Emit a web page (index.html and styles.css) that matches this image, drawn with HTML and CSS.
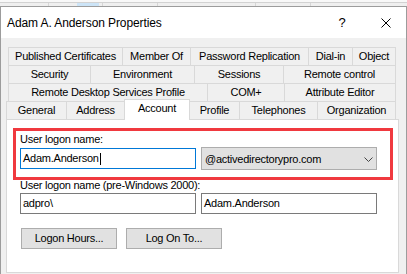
FILE: index.html
```html
<!DOCTYPE html>
<html lang="en">
<head>
    <meta charset="UTF-8">
    <title>Adam A. Anderson Properties</title>
    <link rel="stylesheet" href="styles.css">
</head>
<body>
    <!-- edge of the window behind -->
    <div class="strip"></div>
    <div class="strip-lower">
        <div class="cell c1"></div>
        <div class="cell c2"><div class="hilite"></div></div>
        <div class="cell c3"></div>
        <div class="cell c4"></div>
        <div class="cell c5"></div>
    </div>

    <div class="window">
        <div class="titlebar">
            <span class="title">Adam A. Anderson Properties</span>
            <span class="help">?</span>
            <svg class="close" width="10" height="10" viewBox="0 0 10 10">
                <path d="M0.5 0.5 L9.5 9.5 M9.5 0.5 L0.5 9.5" stroke="#000" stroke-width="1" fill="none"/>
            </svg>
        </div>

        <div class="tabbody">
            <!-- tab rows, back to front -->
            <div class="tabrow back r1">
                <div class="tab">Published Certificates</div>
                <div class="tab">Member Of</div>
                <div class="tab">Password Replication</div>
                <div class="tab">Dial-in</div>
                <div class="tab">Object</div>
            </div>
            <div class="tabrow back r2">
                <div class="tab">Security</div>
                <div class="tab">Environment</div>
                <div class="tab">Sessions</div>
                <div class="tab">Remote control</div>
            </div>
            <div class="tabrow back r3">
                <div class="tab">Remote Desktop Services Profile</div>
                <div class="tab">COM+</div>
                <div class="tab">Attribute Editor</div>
            </div>
            <div class="tabrow front r4">
                <div class="tab">General</div>
                <div class="tab">Address</div>
                <div class="tab active">Account</div>
                <div class="tab">Profile</div>
                <div class="tab">Telephones</div>
                <div class="tab">Organization</div>
            </div>

            <div class="panel">
                <div class="logon-box">
                    <div class="label">User logon name:</div>
                    <div class="field-row">
                        <div class="input focus">Adam.Anderson<span class="caret"></span></div>
                        <div class="combo">
                            @activedirectorypro.com
                            <svg class="chevron" width="9" height="5" viewBox="0 0 9 5">
                                <polyline points="0.5,0.5 4.5,4.5 8.5,0.5" stroke="#444" stroke-width="1" fill="none"/>
                            </svg>
                        </div>
                    </div>
                </div>

                <div class="section">
                    <div class="label">User logon name (pre-Windows 2000):</div>
                    <div class="field-row">
                        <div class="input">adpro\</div>
                        <div class="input">Adam.Anderson</div>
                    </div>
                    <div class="buttons">
                        <div class="btn">Logon Hours...</div>
                        <div class="btn">Log On To...</div>
                    </div>
                </div>
            </div>
        </div>
    </div>
</body>
</html>
```

FILE: styles.css
```css
* {
    box-sizing: border-box;
}
body {
    margin: 0;
    width: 407px;
    height: 274px;
    overflow: hidden;
    font-family: "Liberation Sans", Arial, sans-serif;
    font-size: 11px;
    letter-spacing: -0.25px;
    color: #000;
    background: #fff;
}

/* background window edge */
.strip {
    height: 3px;
    background: #f8f8f8;
    border-bottom: 1px solid #d2d2d2;
}
.strip-lower {
    display: flex;
    height: 3px;
    background: #efefef;
}
.cell {
    border-right: 1px solid #d6d6d6;
}
.c1 { width: 49px; }
.c2 { width: 54px; }
.c3 { width: 55px; }
.c4 { width: 98px; }
.c5 { width: 55px; }
.hilite {
    margin-left: 28px;
    width: 22px;
    height: 3px;
    background: #cce4f7;
}

.window {
    height: 268px;
    border: 1px solid #9c9c9c;
    border-bottom: none;
    background: #f0f0f0;
}
.titlebar {
    display: flex;
    align-items: center;
    height: 31px;
    padding-left: 6px;
    background: #fff;
}
.title {
    flex: 1;
    font-size: 12px;
    line-height: 14px;
    letter-spacing: -0.1px;
}
.help {
    width: 20px;
    margin-right: 29px;
    font-size: 13px;
    line-height: 14px;
    text-align: center;
}
.close {
    margin-right: 15px;
}

.tabbody {
    padding: 9px 0 0 5px;
}
.tabrow {
    display: grid;
    grid-template-rows: 18px;
}
.tabrow.back {
    width: 388px;
    margin-left: 2px;
}
.tabrow.front {
    width: 390px;
}
.r1 { grid-template-columns: 115px 68px 118px 44px 1fr; }
.r2 { grid-template-columns: 83px 104px 89px 1fr; }
.r3 { grid-template-columns: 200px 77px 1fr; }
.r4 { grid-template-columns: 61px 58px 65px 50px 78px 1fr; }

.tab {
    border-top: 1px solid #d9d9d9;
    border-right: 1px solid #d9d9d9;
    background: #f0f0f0;
    line-height: 17px;
    text-align: center;
    white-space: nowrap;
}
.tab:first-child {
    border-left: 1px solid #d9d9d9;
}
.tab.active {
    position: relative;
    z-index: 1;
    margin: -2px 0 -1px -1px;
    border-left: 1px solid #d9d9d9;
    background: #fff;
}

.panel {
    width: 393px;
    height: 154px;
    border: 1px solid #d9d9d9;
    background: #fff;
}
.logon-box {
    width: 380px;
    height: 52px;
    margin: 8px 0 0 6px;
    padding: 2px 0 0 4px;
    border: 3px solid #f0393f;
}
.label {
    line-height: 13px;
}
.field-row {
    display: flex;
    align-items: flex-start;
    gap: 5px;
    margin-top: 2px;
}
.input {
    display: flex;
    align-items: center;
    width: 176px;
    height: 21px;
    padding-left: 2px;
    border: 1px solid #7a7a7a;
    background: #fff;
    line-height: 19px;
    white-space: nowrap;
}
.input.focus {
    border-color: #0078d7;
}
.caret {
    width: 1px;
    height: 12px;
    margin-left: 1px;
    background: #000;
}
.combo {
    display: flex;
    align-items: center;
    width: 176px;
    height: 23px;
    margin-top: -1px;
    padding: 0 3px;
    border: 1px solid #adadad;
    background: #e1e1e1;
    white-space: nowrap;
}
.chevron {
    margin: 2px 0 0 auto;
}

.section {
    padding-left: 13px;
}
.section .label {
    margin-top: -1px;
}
.section .field-row {
    margin-top: 1px;
}
.buttons {
    display: flex;
    gap: 9px;
    margin: 14px 0 0 1px;
}
.btn {
    width: 96px;
    height: 21px;
    border: 1px solid #adadad;
    background: #e1e1e1;
    line-height: 19px;
    text-align: center;
}
```
